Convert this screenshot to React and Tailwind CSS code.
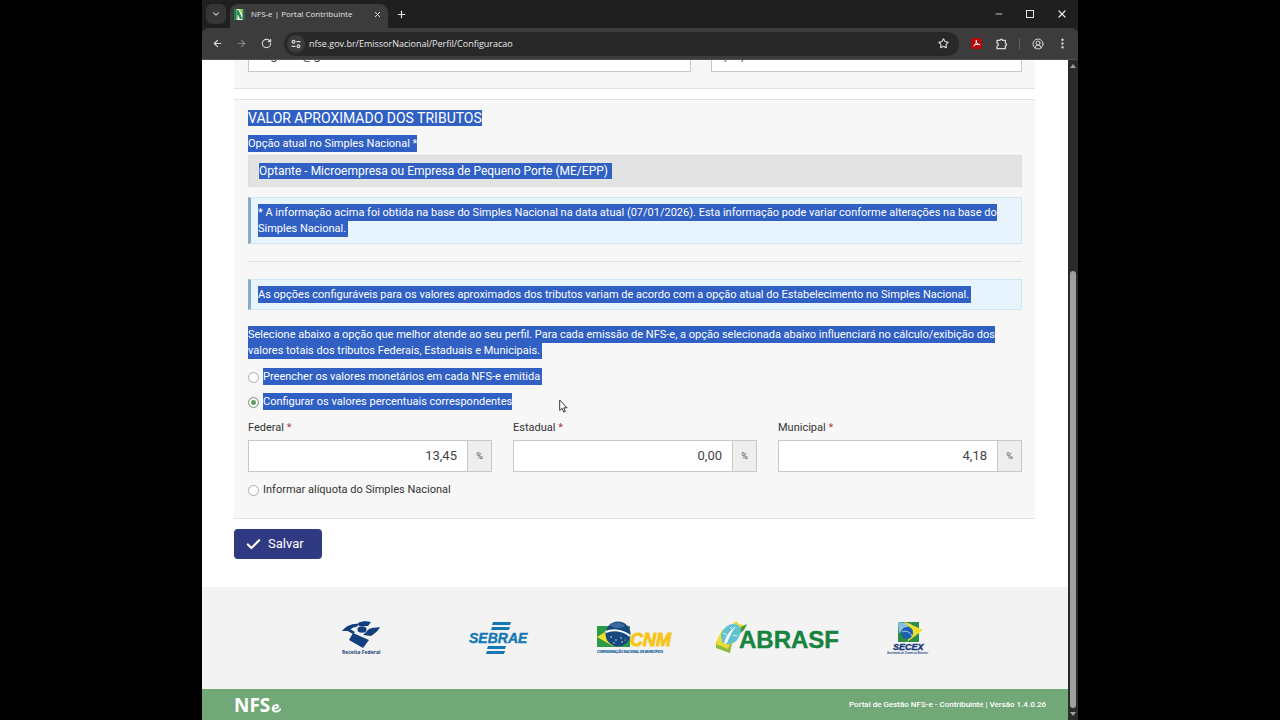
import { useState } from 'react';
import {
  ArrowLeft, ArrowRight, Check, ChevronDown, CircleUserRound, EllipsisVertical,
  Minus, Plus, RotateCw, Star, X,
} from 'lucide-react';

const RATES = [
  { id: 'federal', label: 'Federal', value: '13,45' },
  { id: 'estadual', label: 'Estadual', value: '0,00' },
  { id: 'municipal', label: 'Municipal', value: '4,18' },
];

function Mark({ children, tail = true }) {
  return (
    <span className={tail ? 'bg-[#3060c4] py-0.5 pr-0.5 text-white' : 'bg-[#3060c4] py-0.5 text-white'}>
      {children}
    </span>
  );
}

function TabStrip() {
  return (
    <div className="flex h-7 items-center bg-[#1f1f1f] pl-1 text-[#e3e3e3]">
      <button aria-label="Pesquisar guias" className="flex h-5 w-5 items-center justify-center rounded-md bg-[#353535]">
        <ChevronDown size={10} strokeWidth={2.5} />
      </button>
      <div className="mt-1 ml-1 flex h-6 w-[158px] items-center rounded-t-lg bg-[#3c3c3c] pr-1.5 pb-1 pl-1">
        <svg viewBox="0 0 11 11" className="h-[11px] w-[11px]">
          <rect width="11" height="11" fill="#f4f7f1" />
          <path d="M0 0h2.500v11H0z" fill="#1d7d4c" />
          <path d="M2.500 1h2l4 9H6L3.500 5v5h-1z" fill="#2a8d50" />
          <path d="M5 0h3.500v6z" fill="#a9cd4a" />
          <path d="M8.500 0H11v11H8.500z" fill="#1e6c46" />
        </svg>
        <span className="ml-1.5 flex-1 text-[8px] whitespace-nowrap">NFS-e | Portal Contribuinte</span>
        <button aria-label="Fechar guia"><X size={9} strokeWidth={2.5} /></button>
      </div>
      <button aria-label="Nova guia" className="ml-2"><Plus size={11} strokeWidth={2.5} /></button>
      <div className="ml-auto flex items-center gap-[22px] pr-2.5">
        <button aria-label="Minimizar"><Minus size={10} /></button>
        <button aria-label="Maximizar" className="h-2 w-2 border border-current" />
        <button aria-label="Fechar"><X size={12} strokeWidth={2.5} /></button>
      </div>
    </div>
  );
}

function Toolbar() {
  return (
    <div className="flex h-8 shrink-0 items-center rounded-t-md border-b border-[#505050] bg-[#3c3c3c] pr-[9px] pl-2.5 text-[#d6d6d6]">
      <button aria-label="Voltar"><ArrowLeft size={11} strokeWidth={2.5} /></button>
      <button aria-label="Avançar" className="ml-[13px] text-[#858585]"><ArrowRight size={11} strokeWidth={2.5} /></button>
      <button aria-label="Recarregar" className="ml-3.5"><RotateCw size={11} strokeWidth={2.5} /></button>
      <div className="ml-3 flex h-6 flex-1 items-center rounded-full bg-[#282828] pr-2.5 pl-[3px]">
        <button aria-label="Informações do site" className="flex h-[18px] w-[18px] items-center justify-center rounded-full bg-[#3c3c3c]">
          <svg viewBox="0 0 10 10" className="h-2.5 w-2.5" fill="none" stroke="currentColor" strokeWidth="1.200">
            <circle cx="2.500" cy="2.700" r="1.400" />
            <path d="M5.500 2.700h4M.5 7.300h4" />
            <circle cx="7.500" cy="7.300" r="1.400" />
          </svg>
        </button>
        <input
          aria-label="Endereço"
          readOnly
          value="nfse.gov.br/EmissorNacional/Perfil/Configuracao"
          className="ml-1 min-w-0 flex-1 bg-transparent text-[9px] text-[#e8e8e8] outline-none"
        />
        <button aria-label="Favoritos"><Star size={11} strokeWidth={2.5} /></button>
      </div>
      <button aria-label="Adobe Acrobat" className="ml-3 flex h-[11px] w-[11px] items-center justify-center rounded-xs bg-[#b30b0b] text-white">
        <svg viewBox="0 0 11 11" className="h-[11px] w-[11px]" fill="none" stroke="currentColor" strokeWidth="1">
          <path d="M5.300 2.200c.6 2-.8 4.800-3 6.100M5.300 2.200c-.6 2 1 4.500 3.800 4.500M3.400 7c1.700-.7 3.500-.9 5.700-.3" />
        </svg>
      </button>
      <button aria-label="Extensões" className="ml-3.5">
        <svg viewBox="0 0 12 12" className="h-3 w-3" fill="none" stroke="currentColor" strokeWidth="1.300" strokeLinejoin="round">
          <path d="M1 2.300h3a1.200 1.200 0 0 1 2.400 0h3v3a1.200 1.200 0 0 1 0 2.400v3H1V8a1.400 1.400 0 0 0 0-2.800z" />
        </svg>
      </button>
      <span className="ml-[11px] h-3 w-px bg-[#606060]" />
      <button aria-label="Perfil" className="ml-3"><CircleUserRound size={12} strokeWidth={2} /></button>
      <button aria-label="Menu" className="ml-3"><EllipsisVertical size={13} strokeWidth={2.5} /></button>
    </div>
  );
}

function Option({ value, selected, onSelect, children }) {
  return (
    <label className="flex items-center gap-1">
      <input
        type="radio"
        name="tributos"
        value={value}
        checked={selected === value}
        onChange={() => onSelect(value)}
        className="h-[11px] w-[11px] appearance-none rounded-full border border-[#aaaaaa] bg-white checked:border-[#8f9f90] checked:bg-[#5f9a68] checked:shadow-[inset_0_0_0_2px_#fff]"
      />
      <span>{children}</span>
    </label>
  );
}

function ContactPanel() {
  return (
    <section className="h-[29px] overflow-hidden border-b border-[#e2e2e2] bg-[#f7f7f7] pr-[13px] pl-3.5">
      <div className="-mt-5 grid grid-cols-[443fr_311fr] gap-5">
        <input aria-label="E-mail" defaultValue="regiane@gmail.com" className="h-8 min-w-0 border border-[#c8c8c8] bg-white px-2.5 pb-1 text-[13px] text-[#444]" />
        <input aria-label="Telefone" defaultValue="(11)" className="h-8 min-w-0 border border-[#c8c8c8] bg-white px-2.5 pb-1 text-[13px] text-[#444]" />
      </div>
    </section>
  );
}

function TaxPanel() {
  const [option, setOption] = useState('percentuais');

  return (
    <section className="mt-2.5 border-y border-[#e2e2e2] bg-[#f7f7f7] pt-2.5 pr-[13px] pb-5 pl-3.5 text-[11px] leading-4 text-[#333]">
      <h2 className="text-sm leading-4">
        <span className="bg-[#3060c4] text-white">VALOR APROXIMADO DOS TRIBUTOS</span>
      </h2>
      <p className="mt-2.5"><Mark tail={false}>Opção atual no Simples Nacional *</Mark></p>
      <div className="mt-[3px] flex h-8 items-center border border-[#dedede] bg-[#e3e3e3] px-2.5 text-xs">
        <span className="bg-[#3060c4] pr-1 text-white">Optante - Microempresa ou Empresa de Pequeno Porte (ME/EPP)</span>
      </div>
      <div className="mt-2.5 border border-l-3 border-[#d3e6f2] border-l-[#86abc6] bg-[#e7f4fd] pt-[7px] pr-2.5 pb-1.5 pl-[7px]">
        <Mark>
          * A informação acima foi obtida na base do Simples Nacional na data atual (07/01/2026). Esta informação pode variar conforme alterações na base do Simples Nacional.
        </Mark>
      </div>
      <hr className="my-[17px] border-[#e0e0e0]" />
      <div className="border border-l-3 border-[#d3e6f2] border-l-[#86abc6] bg-[#e7f4fd] pt-[7px] pr-2.5 pb-1.5 pl-[7px]">
        <Mark>
          As opções configuráveis para os valores aproximados dos tributos variam de acordo com a opção atual do Estabelecimento no Simples Nacional.
        </Mark>
      </div>
      <p className="mt-[17px]">
        <Mark>
          Selecione abaixo a opção que melhor atende ao seu perfil. Para cada emissão de NFS-e, a opção selecionada abaixo influenciará no cálculo/exibição dos valores totais dos tributos Federais, Estaduais e Municipais.
        </Mark>
      </p>
      <div className="mt-2.5 flex flex-col gap-[9px]">
        <Option value="monetarios" selected={option} onSelect={setOption}>
          <Mark>Preencher os valores monetários em cada NFS-e emitida</Mark>
        </Option>
        <Option value="percentuais" selected={option} onSelect={setOption}>
          <Mark tail={false}>Configurar os valores percentuais correspondentes</Mark>
        </Option>
      </div>
      <div className="mt-2.5 grid grid-cols-3 gap-[21px]">
        {RATES.map((rate) => (
          <div key={rate.id}>
            <label htmlFor={rate.id} className="block">
              {rate.label} <span className="text-[#a94442]">*</span>
            </label>
            <div className="mt-1 flex h-8 border border-[#c8c8c8] bg-white">
              <input
                id={rate.id}
                defaultValue={rate.value}
                className="min-w-0 flex-1 px-2.5 text-right text-[13px] text-[#444] outline-none"
              />
              <span className="flex w-6 items-center justify-center border-l border-[#c8c8c8] bg-[#eeeeee] text-[9px] text-[#555]">%</span>
            </div>
          </div>
        ))}
      </div>
      <div className="mt-2.5">
        <Option value="aliquota" selected={option} onSelect={setOption}>Informar alíquota do Simples Nacional</Option>
      </div>
    </section>
  );
}

function ReceitaLogo() {
  return (
    <svg viewBox="0 0 42 36" className="h-9 w-[42px]" role="img" aria-label="Receita Federal">
      <g fill="#123f7d">
        <path d="M1 11C5 6 11 3 19 4l-4 3c-3 0-5 2-7 4z" />
        <path d="M17 3c4-2 9-2 13-1l-3 4-9 0z" />
        <ellipse cx="21" cy="9.500" rx="4.500" ry="3.200" />
        <path d="M28 9c4-2 8-1 11-2-2 4-5 6-9 9l-8-1z" />
        <path d="M12 13l16 7-6 8-14-8z" />
        <path d="M7 8l7 4-2 2-7-4z" />
      </g>
      <text x="1" y="34" fontSize="5" fontWeight="700" fill="#123f7d" fontFamily="'Open Sans', sans-serif">Receita Federal</text>
    </svg>
  );
}

function SebraeLogo() {
  return (
    <svg viewBox="0 0 60 36" className="h-9 w-[60px]" role="img" aria-label="Sebrae">
      <path d="M24 2h18l-1 3H23zM23 7h18l-1 3H22zM19 26h18l-1 3H18zM18 31h18l-1 3H17z" fill="#1478b4" />
      <text x="0" y="23" fontSize="14" fontWeight="700" fontStyle="italic" fill="#1478b4" stroke="#1478b4" strokeWidth=".4" fontFamily="'Liberation Sans', Arial, sans-serif">SEBRAE</text>
    </svg>
  );
}

function CnmLogo() {
  return (
    <svg viewBox="0 0 76 36" className="h-9 w-[76px]" role="img" aria-label="CNM">
      <path d="M0 6h33v21H0z" fill="#2c9b45" />
      <path d="M0 17l16-10 15 10-15 9z" fill="#f3dc2f" />
      <circle cx="21" cy="14" r="12.500" fill="#17477f" />
      <path d="M13 5c5-4 12-3 15 1-4 3-12 3-15-1z" fill="#5b94c4" opacity=".5" />
      <path d="M8.500 12C16 9 26 10 33 16" fill="none" stroke="#fff" strokeWidth="2" />
      <g fill="#d7e7f5">
        <circle cx="14" cy="17" r=".8" /><circle cx="19" cy="20" r=".8" /><circle cx="24" cy="18" r=".8" />
        <circle cx="17" cy="23" r=".7" /><circle cx="25" cy="22" r=".8" /><circle cx="28" cy="20" r=".6" />
      </g>
      <text x="33" y="26" fontSize="18" fontWeight="700" fontStyle="italic" fill="#f5c61a" stroke="#f5c61a" strokeWidth="1" fontFamily="'Liberation Sans', Arial, sans-serif">CNM</text>
      <text x="0" y="33" fontSize="3" fontWeight="700" fontStyle="italic" fill="#2b6a9f" stroke="#2b6a9f" strokeWidth=".2" fontFamily="'Liberation Sans', Arial, sans-serif">CONFEDERAÇÃO NACIONAL DE MUNICÍPIOS</text>
    </svg>
  );
}

function AbrasfLogo() {
  return (
    <svg viewBox="0 0 126 36" className="ml-3.5 h-9 w-[126px]" role="img" aria-label="Abrasf">
      <path d="M0 24L7 10 19 3l2-2 3 3 8 2-7 7-3 7-7 6-1 7z" fill="#f0db35" />
      <path d="M1 24l12 5 2-5 2-1-2 10-14-5z" fill="#8cbb3d" />
      <path d="M26 7l6-3-3 6-6 5z" fill="#3d9a49" />
      <path d="M6 15C8 7 16 2 23 5c5 3 2 12-2 16-5 4-11 4-14 1z" fill="#62c2d2" />
      <path d="M9 24c1-6 5-13 12-18-5 7-6 10-9 17z" fill="#fff" />
      <path d="M15 7l3 3M8 13l4 2M18 15l4 1" stroke="#d8f2f5" strokeWidth="1" />
      <text x="24" y="28" fontSize="24" fontWeight="700" fill="#16833f" stroke="#16833f" strokeWidth=".4" fontFamily="'Liberation Sans', Arial, sans-serif">ABRASF</text>
    </svg>
  );
}

function SecexLogo() {
  return (
    <svg viewBox="0 0 44 36" className="h-9 w-11" role="img" aria-label="Secex">
      <path d="M12 2h21v20H12z" fill="#2c8e45" />
      <path d="M12 2l14 2-13 9z" fill="#8ac0e3" />
      <path d="M17 1l20 9-16 12 6-12z" fill="#f2df36" />
      <circle cx="21" cy="13" r="6" fill="#1e5fb0" />
      <path d="M16 12c4-2 8 0 10 4" fill="none" stroke="#a8d5f2" strokeWidth="1" />
      <text x="7" y="30" fontSize="9" fontWeight="700" fontStyle="italic" fill="#17397c" stroke="#17397c" strokeWidth=".4" fontFamily="'Liberation Sans', Arial, sans-serif">SECEX</text>
      <text x="1" y="34" fontSize="2.700" fontWeight="700" fontStyle="italic" fill="#17397c" fontFamily="'Liberation Sans', Arial, sans-serif">Secretaria de Comércio Exterior</text>
    </svg>
  );
}

function Footer() {
  return (
    <footer className="mt-7 flex flex-1 flex-col">
      <div className="grid flex-1 grid-cols-5 place-items-center bg-[#f3f3f3] px-[92px]">
        <ReceitaLogo />
        <SebraeLogo />
        <CnmLogo />
        <AbrasfLogo />
        <SecexLogo />
      </div>
      <div className="flex h-[31px] items-center justify-between bg-[#72a877] pr-[22px] pl-8 text-white">
        <svg viewBox="0 0 48 24" className="h-6 w-12" role="img" aria-label="NFSe">
          <text x="0" y="19" fontSize="19" fontWeight="700" fill="#fff" fontFamily="'Open Sans', sans-serif">NFS</text>
          <path d="M38.500 15.500c3 .3 6-.5 5.700-2.300-.3-2-4.700-1.500-5.400 1.400-.7 2.700 1.500 4.300 4 3.900 1.500-.2 2.800-1 3.400-2.200" fill="none" stroke="#fff" strokeWidth="1.800" strokeLinecap="round" />
        </svg>
        <span className="text-[8px] font-medium">Portal de Gestão NFS-e - Contribuinte | Versão 1.4.0.26</span>
      </div>
    </footer>
  );
}

function ScrollBar() {
  return (
    <div className="flex w-2.5 flex-col items-center justify-between bg-[#2b2b2b] py-1">
      <svg viewBox="0 0 6 4" className="h-1 w-1.5"><path d="M3 0l3 4H0z" fill="#a0a0a0" /></svg>
      <div className="mt-auto mb-1 h-[67%] w-1.5 rounded-full bg-[#9f9f9f]" />
      <svg viewBox="0 0 6 4" className="h-1 w-1.5"><path d="M3 4L0 0h6z" fill="#a0a0a0" /></svg>
    </div>
  );
}

export default function App() {
  return (
    <div className="relative h-screen overflow-hidden bg-black px-[202px]">
      <div className="flex h-full flex-col bg-[#1f1f1f] font-['Open_Sans',sans-serif]">
        <TabStrip />
        <Toolbar />
        <div className="flex min-h-0 flex-1">
          <div className="flex min-w-0 flex-1 flex-col bg-white font-[Roboto,sans-serif]">
            <main className="pr-[33px] pl-8">
              <ContactPanel />
              <TaxPanel />
              <button className="mt-2.5 flex h-[30px] items-center gap-1.5 rounded-sm bg-[#303a83] pr-[18px] pl-[11px] text-[13px] text-white">
                <Check size={17} strokeWidth={3} />
                Salvar
              </button>
            </main>
            <Footer />
          </div>
          <ScrollBar />
        </div>
      </div>
      <svg viewBox="0 0 9 14" className="pointer-events-none absolute top-[399px] left-[559px] h-3.5 w-[9px]">
        <path d="M.7 1v10.500l2.400-2.200 1.600 3.700 1.600-.7-1.600-3.500h3.400z" fill="#fff" stroke="#222" strokeWidth=".9" />
      </svg>
    </div>
  );
}
